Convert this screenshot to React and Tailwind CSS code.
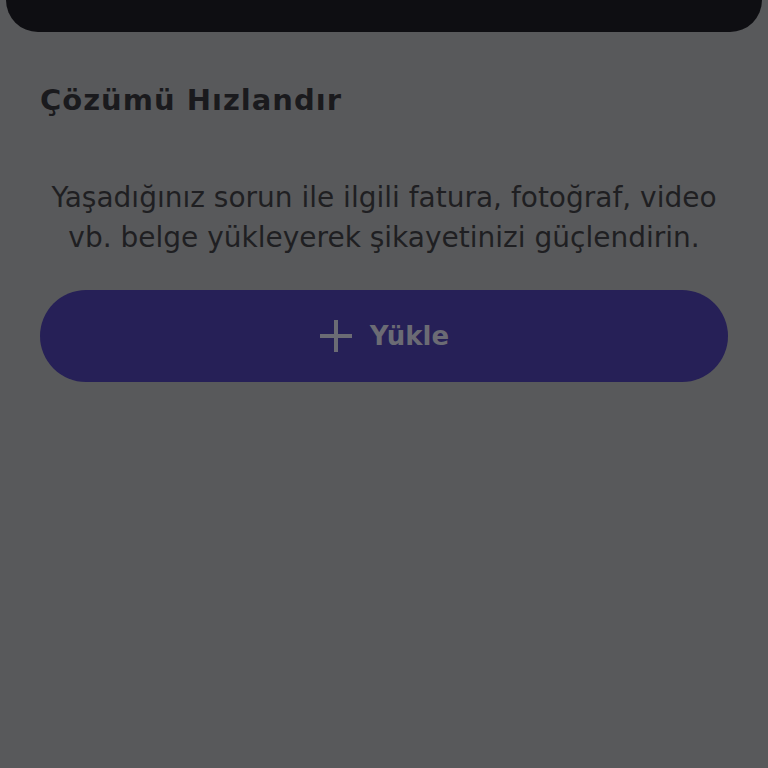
import React from 'react'

const App = () => {
  return (
    <div className="w-[768px] h-[768px] bg-[#58595b] overflow-hidden" style={{ fontFamily: '"DejaVu Sans", "Open Sans", sans-serif' }}>
      <div className="mx-[6px] h-[32px] bg-[#0e0e12] rounded-b-[36px]"></div>

      <div className="px-[40px]">
        <h2 className="mt-[49px] text-[29px] leading-[38px] font-bold tracking-[1px] text-[#1a1a1d]">Çözümü Hızlandır</h2>

        <p className="mt-[59px] text-center text-[28px] leading-[40px] text-[#1f1f22]">
          Yaşadığınız sorun ile ilgili fatura, fotoğraf, video<br />
          vb. belge yükleyerek şikayetinizi güçlendirin.
        </p>

        <button className="mt-[32px] w-full h-[92px] rounded-full bg-[#262057] flex items-center justify-center gap-[17px]">
          <svg width="34" height="34" viewBox="0 0 34 34" fill="none">
            <path d="M17 1v32M1 17h32" stroke="#6b6b74" strokeWidth="4" />
          </svg>
          <span className="text-[26px] font-bold text-[#6b6b74]">Yükle</span>
        </button>
      </div>
    </div>
  );
}

export default App
